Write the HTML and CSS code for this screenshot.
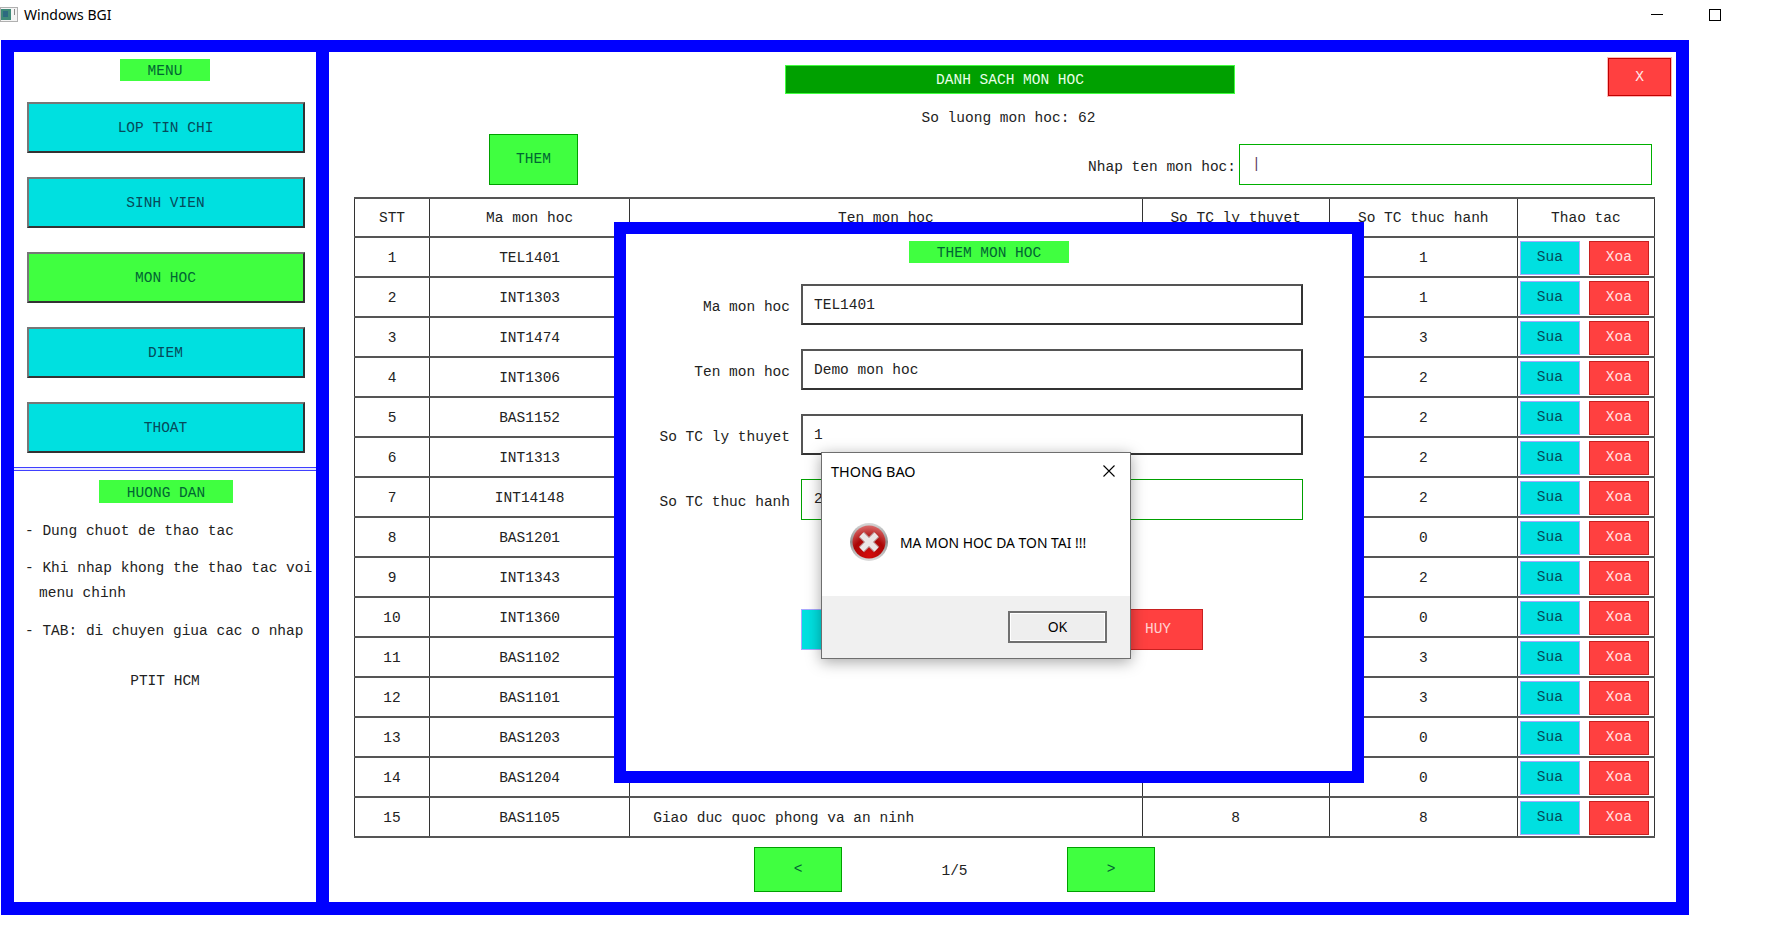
FILE: index.html
```html
<!DOCTYPE html>
<html lang="en">
<head>
    <meta charset="UTF-8">
    <title>Windows BGI</title>
    <link rel="stylesheet" href="styles.css">
</head>
<body>
<div class="titlebar">
    <svg class="app_icon" width="18" height="15" viewBox="0 0 18 15">
        <rect x="0.5" y="0.5" width="17" height="14" fill="#f4f4f4" stroke="#b0b0b0"/>
        <rect x="1" y="2" width="10" height="11" fill="#3f8a78"/>
        <rect x="3" y="4" width="5" height="6" fill="#2d6a80"/>
        <rect x="14" y="2" width="1" height="6" fill="#8a8a8a"/>
    </svg>
    <span class="app_name">Windows BGI</span>
    <span class="win_min"></span>
    <span class="win_max"></span>
</div>

<div class="frame">
    <div class="side">
        <div class="tag tag_menu">MENU</div>
        <div class="menu_btn btn_first">LOP TIN CHI</div>
        <div class="menu_btn">SINH VIEN</div>
        <div class="menu_btn menu_on">MON HOC</div>
        <div class="menu_btn">DIEM</div>
        <div class="menu_btn">THOAT</div>
        <div class="side_line"></div>
        <div class="tag tag_help">HUONG DAN</div>
        <p class="help help_1">- Dung chuot de thao tac</p>
        <p class="help help_2">- Khi nhap khong the thao tac voi<span class="help_more">menu chinh</span></p>
        <p class="help help_3">- TAB: di chuyen giua cac o nhap</p>
        <p class="help help_4">PTIT HCM</p>
    </div>

    <div class="main">
        <div class="row_a">
            <div class="title_bar">DANH SACH MON HOC</div>
            <div class="btn_close">X</div>
        </div>
        <div class="count">So luong mon hoc: 62</div>
        <div class="row_c">
            <div class="btn_add">THEM</div>
            <span class="search_label">Nhap ten mon hoc:</span>
            <div class="search_input"><span class="caret">|</span></div>
        </div>

        <table class="list">
            <colgroup>
                <col class="c_stt"><col class="c_ma"><col class="c_ten"><col class="c_lt"><col class="c_th"><col class="c_act">
            </colgroup>
            <tr class="head"><td>STT</td><td>Ma mon hoc</td><td>Ten mon hoc</td><td>So TC ly thuyet</td><td>So TC thuc hanh</td><td>Thao tac</td></tr>
            <tr><td>1</td><td>TEL1401</td><td></td><td></td><td>1</td><td><div class="acts"><span class="sua">Sua</span><span class="xoa">Xoa</span></div></td></tr>
            <tr><td>2</td><td>INT1303</td><td></td><td></td><td>1</td><td><div class="acts"><span class="sua">Sua</span><span class="xoa">Xoa</span></div></td></tr>
            <tr><td>3</td><td>INT1474</td><td></td><td></td><td>3</td><td><div class="acts"><span class="sua">Sua</span><span class="xoa">Xoa</span></div></td></tr>
            <tr><td>4</td><td>INT1306</td><td></td><td></td><td>2</td><td><div class="acts"><span class="sua">Sua</span><span class="xoa">Xoa</span></div></td></tr>
            <tr><td>5</td><td>BAS1152</td><td></td><td></td><td>2</td><td><div class="acts"><span class="sua">Sua</span><span class="xoa">Xoa</span></div></td></tr>
            <tr><td>6</td><td>INT1313</td><td></td><td></td><td>2</td><td><div class="acts"><span class="sua">Sua</span><span class="xoa">Xoa</span></div></td></tr>
            <tr><td>7</td><td>INT14148</td><td></td><td></td><td>2</td><td><div class="acts"><span class="sua">Sua</span><span class="xoa">Xoa</span></div></td></tr>
            <tr><td>8</td><td>BAS1201</td><td></td><td></td><td>0</td><td><div class="acts"><span class="sua">Sua</span><span class="xoa">Xoa</span></div></td></tr>
            <tr><td>9</td><td>INT1343</td><td></td><td></td><td>2</td><td><div class="acts"><span class="sua">Sua</span><span class="xoa">Xoa</span></div></td></tr>
            <tr><td>10</td><td>INT1360</td><td></td><td></td><td>0</td><td><div class="acts"><span class="sua">Sua</span><span class="xoa">Xoa</span></div></td></tr>
            <tr><td>11</td><td>BAS1102</td><td></td><td></td><td>3</td><td><div class="acts"><span class="sua">Sua</span><span class="xoa">Xoa</span></div></td></tr>
            <tr><td>12</td><td>BAS1101</td><td></td><td></td><td>3</td><td><div class="acts"><span class="sua">Sua</span><span class="xoa">Xoa</span></div></td></tr>
            <tr><td>13</td><td>BAS1203</td><td></td><td></td><td>0</td><td><div class="acts"><span class="sua">Sua</span><span class="xoa">Xoa</span></div></td></tr>
            <tr><td>14</td><td>BAS1204</td><td></td><td></td><td>0</td><td><div class="acts"><span class="sua">Sua</span><span class="xoa">Xoa</span></div></td></tr>
            <tr><td>15</td><td>BAS1105</td><td class="ten">Giao duc quoc phong va an ninh</td><td>8</td><td>8</td><td><div class="acts"><span class="sua">Sua</span><span class="xoa">Xoa</span></div></td></tr>
        </table>

        <div class="pager">
            <div class="btn_page">&lt;</div>
            <div class="page_no">1/5</div>
            <div class="btn_page">&gt;</div>
        </div>
    </div>
</div>

<!-- form them mon hoc -->
<div class="modal">
    <div class="tag tag_modal">THEM MON HOC</div>
    <div class="form">
        <span class="form_label">Ma mon hoc</span><div class="form_input">TEL1401</div>
        <span class="form_label">Ten mon hoc</span><div class="form_input">Demo mon hoc</div>
        <span class="form_label">So TC ly thuyet</span><div class="form_input">1</div>
        <span class="form_label">So TC thuc hanh</span><div class="form_input form_active">2</div>
    </div>
    <div class="form_btns">
        <div class="btn_save">LUU</div>
        <div class="btn_cancel">HUY</div>
    </div>
</div>

<!-- hop thoai thong bao -->
<div class="dialog">
    <div class="dlg_head">
        <span class="dlg_title">THONG BAO</span>
        <svg class="dlg_x" width="12" height="12" viewBox="0 0 12 12"><path d="M0.5 0.5L11.5 11.5M11.5 0.5L0.5 11.5" stroke="#000" stroke-width="1.1" fill="none"/></svg>
    </div>
    <div class="dlg_body">
        <svg class="dlg_icon" width="40" height="40" viewBox="0 0 40 40">
            <defs>
                <linearGradient id="ring" x1="0" y1="0" x2="0" y2="1">
                    <stop offset="0" stop-color="#d8d8d8"/>
                    <stop offset="0.5" stop-color="#8f8f8f"/>
                    <stop offset="1" stop-color="#dcdcdc"/>
                </linearGradient>
                <radialGradient id="red" cx="0.5" cy="0.9" r="0.9">
                    <stop offset="0" stop-color="#d40b0b"/>
                    <stop offset="0.55" stop-color="#ab0606"/>
                    <stop offset="1" stop-color="#d96a6a"/>
                </radialGradient>
            </defs>
            <circle cx="20" cy="20" r="19" fill="url(#ring)"/>
            <circle cx="20" cy="20" r="16.5" fill="url(#red)"/>
            <path d="M12.5 12.5L27.5 27.5M27.5 12.5L12.5 27.5" stroke="#b98a8a" stroke-width="7.5" fill="none"/>
            <path d="M12.5 12.5L27.5 27.5M27.5 12.5L12.5 27.5" stroke="#ebe6e6" stroke-width="5.5" fill="none"/>
        </svg>
        <span class="dlg_msg">MA MON HOC DA TON TAI !!!</span>
    </div>
    <div class="dlg_foot">
        <div class="dlg_ok">OK</div>
    </div>
</div>
</body>
</html>
```

FILE: styles.css
```css
*{
    margin: 0;
    padding: 0;
    box-sizing: border-box;
}
body{
    background-color: #fff;
    font-family: "Liberation Mono", "DejaVu Sans Mono", monospace;
    font-size: 14.5px;
    color: #222;
    overflow: hidden;
}

/* thanh tieu de */
.titlebar{
    height: 40px;
    display: flex;
    align-items: flex-start;
    font-family: "Noto Sans", sans-serif;
    color: #000;
}
.app_icon{
    margin-top: 7px;
    flex: none;
}
.app_name{
    margin-left: 6px;
    margin-top: 5px;
    font-size: 14px;
    line-height: 20px;
}
.win_min{
    margin-left: auto;
    margin-top: 14px;
    width: 12px;
    height: 1px;
    background-color: #000;
}
.win_max{
    margin-left: 46px;
    margin-right: 47px;
    margin-top: 9px;
    width: 12px;
    height: 12px;
    border: 1px solid #000;
}

/* khung chinh */
.frame{
    width: 1688px;
    height: 875px;
    margin-left: 1px;
    border: 12px solid #00f;
    border-width: 12px 13px 13px 13px;
    display: flex;
}
.side{
    width: 302px;
    flex: none;
    display: flex;
    flex-direction: column;
    align-items: center;
}
.main{
    flex: 1;
    border-left: 13px solid #00f;
    min-width: 0;
}

.tag{
    background-color: #40ff40;
    display: flex;
    align-items: center;
    justify-content: center;
    color: #063;
    height: 22px;
    padding-top: 2px;
    flex: none;
}
.tag_menu{
    width: 90px;
    margin-top: 7px;
}
.menu_btn{
    width: 278px;
    height: 51px;
    margin-top: 24px;
    margin-left: 1px;
    background-color: #00e0e0;
    border: 2px solid #333;
    border-top-color: #777;
    border-left-color: #777;
    display: flex;
    align-items: center;
    justify-content: center;
    color: #064a5a;
    flex: none;
}
.btn_first{
    margin-top: 21px;
}
.menu_on{
    background-color: #40ff40;
    color: #063;
}
.side_line{
    width: 100%;
    height: 4px;
    margin-top: 14px;
    background-color: #e8e8ff;
    border-top: 1px solid #4040ff;
    border-bottom: 1px solid #4040ff;
    flex: none;
}
.tag_help{
    width: 134px;
    height: 23px;
    margin-top: 9px;
    margin-left: 2px;
}
.help{
    width: 100%;
    padding-left: 11px;
    line-height: 24px;
    white-space: nowrap;
}
.help_1{
    margin-top: 16px;
}
.help_2{
    margin-top: 13px;
    line-height: 25px;
}
.help_more{
    display: block;
    padding-left: 14px;
}
.help_3{
    margin-top: 13px;
}
.help_4{
    margin-top: 26px;
    padding-left: 0;
    text-align: center;
}

/* phan tren */
.row_a{
    display: flex;
    align-items: flex-start;
    padding-left: 456px;
    height: 44px;
}
.title_bar{
    width: 450px;
    height: 29px;
    margin-top: 13px;
    background-color: #00a000;
    border: 1px solid #40ff40;
    color: #e8ffe8;
    display: flex;
    align-items: center;
    justify-content: center;
}
.btn_close{
    width: 63px;
    height: 38px;
    margin-top: 6px;
    margin-left: auto;
    margin-right: 5px;
    background-color: #ff4040;
    border: 1px solid #c00000;
    outline: 1px solid #ffb8b8;
    color: #ffe8e8;
    display: flex;
    align-items: center;
    justify-content: center;
}
.count{
    margin-top: 12px;
    height: 20px;
    line-height: 20px;
    text-align: center;
    padding-left: 12px;
}
.row_c{
    margin-top: 6px;
    height: 51px;
    display: flex;
    align-items: flex-end;
    padding-left: 160px;
    padding-right: 24px;
}
.btn_add{
    width: 89px;
    height: 51px;
    background-color: #40ff40;
    border: 1px solid #00a000;
    color: #063;
    display: flex;
    align-items: center;
    justify-content: center;
    padding-bottom: 2px;
}
.search_label{
    margin-left: auto;
    margin-right: 3px;
    line-height: 20px;
    margin-bottom: 8px;
}
.search_input{
    width: 413px;
    height: 41px;
    border: 1px solid #00b000;
    padding-left: 12px;
    line-height: 39px;
    color: #604060;
}

/* bang */
.list{
    margin-top: 12px;
    margin-left: 25px;
    width: 1301px;
    table-layout: fixed;
    border-collapse: collapse;
}
.c_stt{ width: 75px; }
.c_ma{ width: 200px; }
.c_ten{ width: 512px; }
.c_lt{ width: 187px; }
.c_th{ width: 188px; }
.c_act{ width: 137px; }
.list td{
    height: 40px;
    border: 1px solid #333;
    border-top: 2px solid #555;
    border-bottom: 2px solid #555;
    text-align: center;
    padding: 2px 0 0;
    white-space: nowrap;
}
.list .head td{
    height: 39px;
    padding-top: 0;
}
.list .ten{
    text-align: left;
    padding-left: 23px;
}
.acts{
    display: flex;
    gap: 9px;
    padding-left: 2px;
    justify-content: flex-start;
}
.sua,
.xoa{
    width: 60px;
    height: 34px;
    display: flex;
    align-items: center;
    justify-content: center;
    padding-bottom: 2px;
}
.sua{
    background-color: #00e0e0;
    border: 1px solid #a8a8ff;
    color: #064a5a;
}
.xoa{
    background-color: #ff4040;
    border: 1px solid #c82020;
    color: #ffe0e0;
}

.pager{
    margin-top: 9px;
    padding-left: 425px;
    display: flex;
    align-items: center;
}
.btn_page{
    width: 88px;
    height: 45px;
    background-color: #40ff40;
    border: 1px solid #00a000;
    color: #063;
    display: flex;
    align-items: center;
    justify-content: center;
    padding-bottom: 2px;
}
.page_no{
    width: 225px;
    text-align: center;
    padding-top: 2px;
}

/* form them mon hoc */
.modal{
    position: absolute;
    left: 614px;
    top: 222px;
    width: 750px;
    height: 561px;
    border: 12px solid #00f;
    background-color: #fff;
    display: flex;
    flex-direction: column;
    align-items: flex-start;
}
.tag_modal{
    width: 160px;
    margin-top: 7px;
    margin-left: 283px;
}
.form{
    margin-top: 21px;
    display: grid;
    grid-template-columns: 164px 502px;
    column-gap: 11px;
    row-gap: 24px;
    grid-auto-rows: 41px;
}
.form_label{
    text-align: right;
    line-height: 47px;
    white-space: nowrap;
}
.form_input{
    border: 2px solid #333;
    border-top-color: #555;
    border-left-color: #555;
    padding-left: 11px;
    line-height: 38px;
}
.form_active{
    border: 1px solid #00a000;
    padding-left: 12px;
}
.form_btns{
    margin-top: 89px;
    margin-left: 175px;
    display: flex;
    gap: 222px;
}
.btn_save,
.btn_cancel{
    width: 90px;
    height: 41px;
    display: flex;
    align-items: center;
    justify-content: center;
}
.btn_save{
    background-color: #00e0e0;
    border: 1px solid #a8a8ff;
}
.btn_cancel{
    background-color: #ff4040;
    border: 1px solid #c82020;
    color: #ffd0d0;
    padding-bottom: 1px;
}

/* hop thoai */
.dialog{
    position: absolute;
    left: 821px;
    top: 452px;
    width: 310px;
    height: 207px;
    background-color: #fff;
    border: 1px solid #6e6e6e;
    box-shadow: 0 3px 14px rgba(0, 0, 0, 0.35);
    font-family: "Noto Sans", sans-serif;
    color: #000;
    display: flex;
    flex-direction: column;
}
.dlg_head{
    height: 35px;
    display: flex;
    align-items: center;
    padding: 1px 15px 0 9px;
    justify-content: space-between;
}
.dlg_title{
    font-size: 14.4px;
}
.dlg_body{
    height: 108px;
    display: flex;
    align-items: flex-start;
    padding-top: 34px;
    padding-left: 27px;
}
.dlg_msg{
    margin-left: 11px;
    margin-top: 12px;
    font-size: 13.9px;
    line-height: 18px;
    white-space: nowrap;
}
.dlg_foot{
    flex: 1;
    background-color: #f0f0f0;
    display: flex;
    justify-content: flex-end;
    align-items: flex-start;
    padding-top: 15px;
    padding-right: 23px;
}
.dlg_ok{
    width: 99px;
    height: 32px;
    border: 2px solid #707070;
    background-color: #eee;
    box-shadow: inset 0 0 0 1px #fff;
    font-size: 14px;
    padding-bottom: 2px;
    display: flex;
    align-items: center;
    justify-content: center;
}
```
